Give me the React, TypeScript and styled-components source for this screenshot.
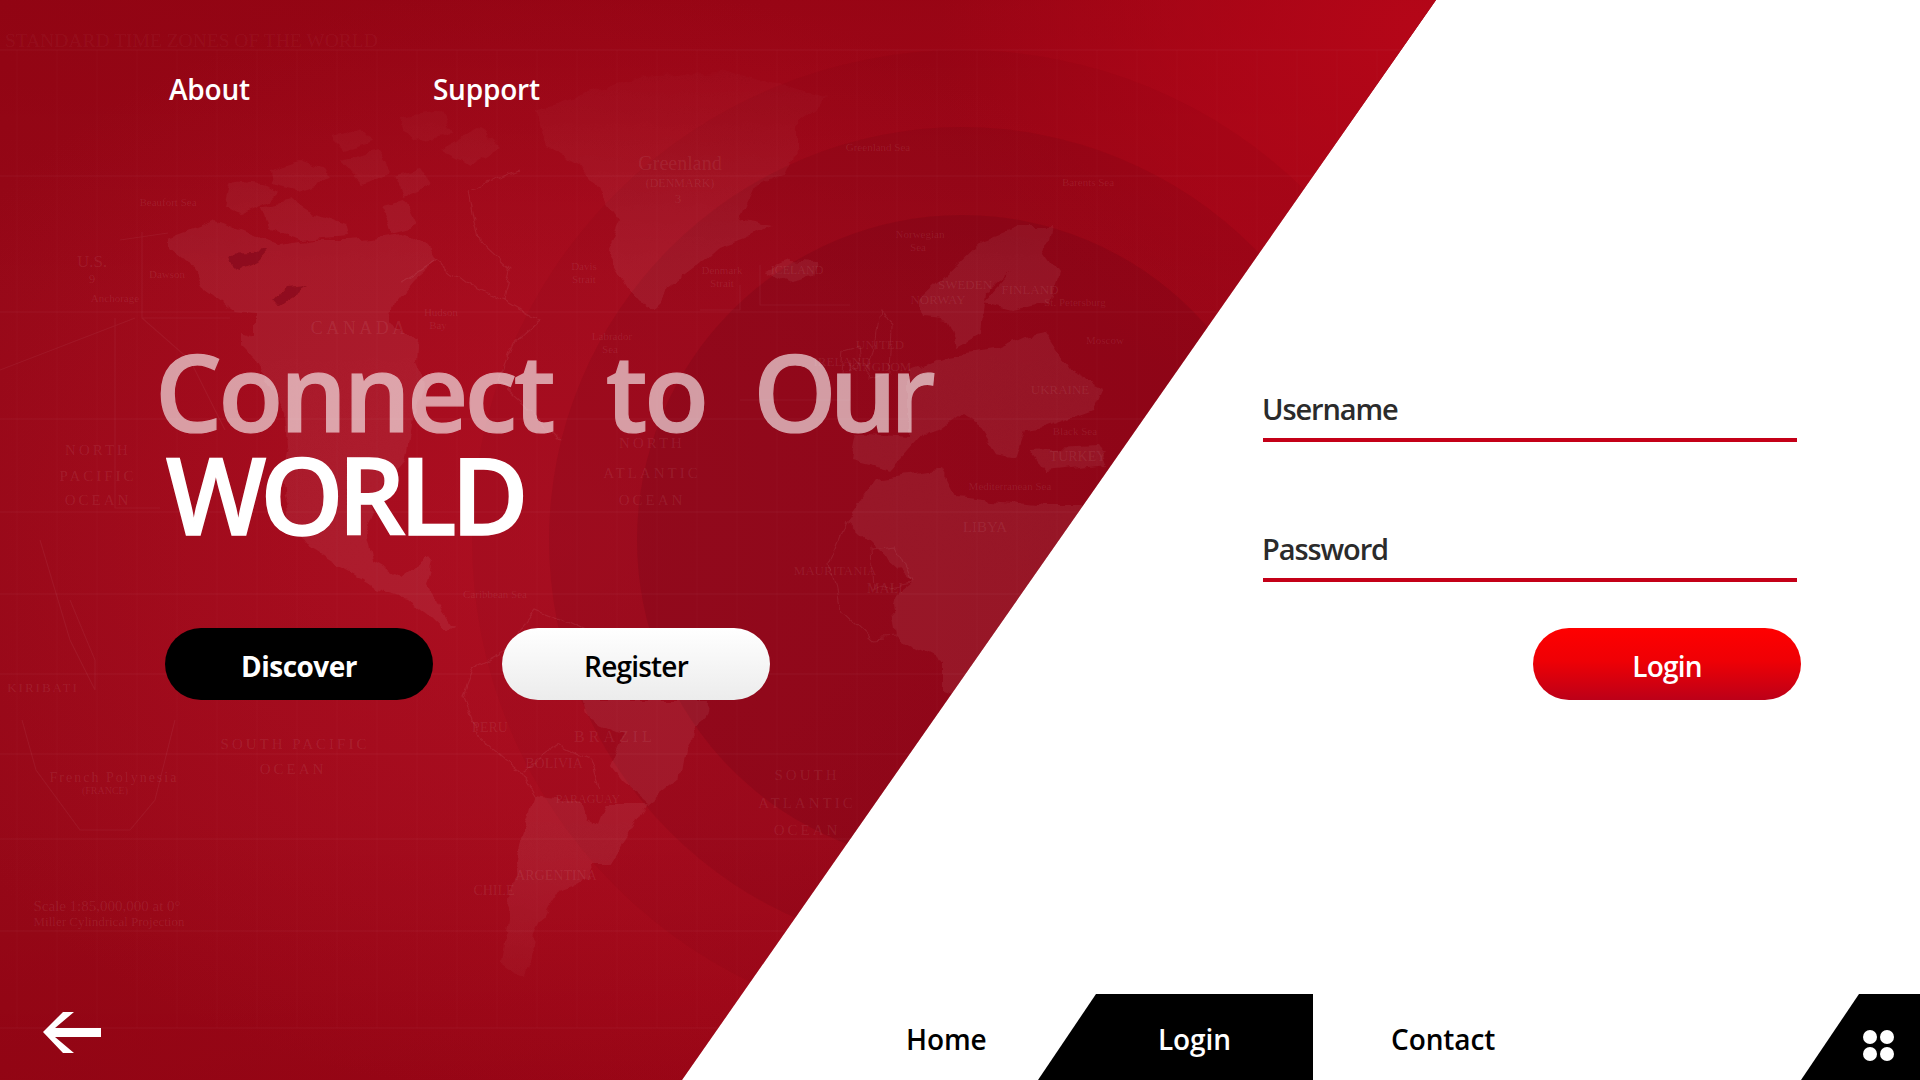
import React from "react";
import styled, { createGlobalStyle } from "styled-components";

const Global = createGlobalStyle`
  html, body { margin: 0; padding: 0; background: #fff; }
  * { box-sizing: border-box; }
`;

const FONT = `"Open Sans", "Noto Sans", "Liberation Sans", sans-serif`;

const Page = styled.div`
  position: relative;
  width: 1920px;
  height: 1080px;
  overflow: hidden;
  display: flex;
  flex-direction: column;
  background: #fff;
  font-family: ${FONT};
`;

const Backdrop = styled.div`
  position: absolute;
  inset: 0;
  clip-path: polygon(0 0, 1436px 0, 682px 100%, 0 100%);
  background:
    radial-gradient(ellipse 480px 400px at 1420px 30px, #b50618 0%, rgba(181, 6, 24, 0) 100%),
    radial-gradient(ellipse 720px 560px at 560px 540px, rgba(186, 20, 40, 0.5) 0%, rgba(186, 20, 40, 0) 100%),
    linear-gradient(180deg, rgba(140, 0, 14, 0.5) 0%, rgba(140, 0, 14, 0) 28%, rgba(140, 0, 14, 0) 76%, rgba(140, 0, 14, 0.42) 100%),
    linear-gradient(90deg, #960818 0%, #a40a1c 40%, #ab0618 100%);
`;

const MapArt = styled.svg`
  position: absolute;
  inset: 0;
  width: 1920px;
  height: 1080px;
`;

const Main = styled.main`
  position: relative;
  flex: 1;
  display: grid;
  grid-template-columns: 1263px 1fr;
`;

const Left = styled.section`
  display: flex;
  flex-direction: column;
  padding-left: 165px;
`;

const TopLinks = styled.nav`
  display: flex;
  padding: 69px 0 0 4px;
  gap: 183px;
`;

const TopLink = styled.a`
  color: #fff;
  font-size: 28px;
  line-height: 41px;
  font-weight: 600;
  letter-spacing: -0.2px;
`;

const Title = styled.h1`
  margin: 230px 0 0;
`;

const DimLine = styled.span`
  display: block;
  font-size: 106px;
  line-height: 103px;
  font-weight: 600;
  white-space: pre;
  color: #fff;
  opacity: 0.6;
  -webkit-text-stroke: 1.2px #fff;
  letter-spacing: -3.6px;
  word-spacing: 3px;
  margin-left: -10px;
`;

const TightWord = styled.span`
  margin-left: -6px;
  letter-spacing: -7px;
`;

const StrongLine = styled.span`
  display: block;
  font-size: 106px;
  line-height: 102px;
  font-weight: 600;
  color: #fff;
  -webkit-text-stroke: 1.4px #fff;
  letter-spacing: -6px;
  margin-left: 1px;
`;

const Buttons = styled.div`
  display: flex;
  gap: 69px;
  margin-top: 83px;
`;

const Pill = styled.button<{ $kind: "dark" | "light" | "red" }>`
  width: 268px;
  height: 72px;
  border: 0;
  border-radius: 36px;
  padding: 3px 0 0;
  font-family: ${FONT};
  font-size: 28px;
  letter-spacing: ${(p) => (p.$kind === "dark" ? "-0.5px" : "-0.8px")};
  font-weight: ${(p) => (p.$kind === "dark" ? 700 : 600)};
  color: ${(p) => (p.$kind === "light" ? "#000" : "#fff")};
  background: ${(p) =>
    p.$kind === "dark"
      ? "#000"
      : p.$kind === "light"
        ? "linear-gradient(180deg, #fff 0%, #ececec 100%)"
        : "linear-gradient(180deg, #ff0000 0%, #ef0005 45%, #bc0018 100%)"};
`;

const Form = styled.form`
  display: flex;
  flex-direction: column;
  width: 538px;
  padding-top: 389px;
`;

const Field = styled.label`
  display: block;
  width: 534px;
  height: 53px;
  margin-bottom: 87px;
  border-bottom: 4px solid #c40018;
  color: #2b2b2b;
  font-size: 29px;
  line-height: 40px;
  font-weight: 600;
  letter-spacing: -1.1px;
  text-indent: -1px;
`;

const FormAction = styled.div`
  display: flex;
  justify-content: flex-end;
  margin-top: -41px;
`;

const BottomBar = styled.footer`
  position: relative;
  display: flex;
  align-items: stretch;
  height: 86px;
`;

const Back = styled.a`
  width: 906px;
  padding: 18px 0 0 43px;
  flex: none;
`;

const NavItem = styled.a<{ $w: number }>`
  flex: none;
  width: ${(p) => p.$w}px;
  color: #000;
  font-size: 28px;
  font-weight: 600;
  letter-spacing: -0.1px;
  line-height: 90px;
`;

const NavTab = styled.a`
  flex: none;
  width: 275px;
  margin-right: 78px;
  padding-left: 120px;
  background: #000;
  clip-path: polygon(58px 0, 100% 0, 100% 100%, 0 100%);
  color: #fff;
  font-size: 28px;
  font-weight: 600;
  letter-spacing: -0.1px;
  line-height: 90px;
`;

const MenuTab = styled.a`
  flex: none;
  margin-left: auto;
  width: 119px;
  background: #000;
  clip-path: polygon(58px 0, 100% 0, 100% 100%, 0 100%);
  padding: 36px 0 0 62px;
`;

const Dots = styled.div`
  display: grid;
  grid-template-columns: 14px 14px;
  gap: 3px;
`;

const Dot = styled.span`
  width: 14px;
  height: 14px;
  border-radius: 50%;
  background: #fff;
`;

const land = [
  // Canada + US
  "M169,237 L215,220 L242,230 L280,245 L314,240 L349,240 L379,237 L406,232 L429,247 L437,260 L414,280 L395,303 L391,323 L418,337 L416,362 L425,385 L412,420 L405,462 L378,492 L366,530 L373,560 L402,577 L428,558 L432,563 L426,585 L438,603 L455,627 L446,632 L430,617 L405,597 L375,587 L333,563 L312,550 L290,520 L282,480 L288,448 L286,412 L257,362 L242,347 L242,333 L255,337 L255,312 L234,310 L207,290 L188,263 L169,247 Z",
  // Arctic islands
  "M230,182 L262,185 L280,192 L272,200 L242,213 L224,207 Z",
  "M261,207 L290,200 L310,212 L345,225 L348,236 L300,240 L268,228 Z",
  "M270,170 L300,160 L322,168 L330,180 L296,190 L272,184 Z",
  "M330,135 L360,128 L372,142 L345,150 Z",
  "M340,160 L378,152 L392,172 L362,184 Z",
  "M395,175 L420,168 L432,186 L405,198 Z",
  "M380,205 L405,200 L418,225 L392,232 Z",
  "M400,118 L440,112 L452,134 L415,140 Z",
  "M440,150 L480,128 L500,146 L470,165 Z",
  // Greenland
  "M536,110 L560,103 L642,77 L720,72 L773,83 L827,97 L798,120 L798,150 L788,173 L754,187 L739,220 L773,227 L720,247 L696,267 L669,287 L657,310 L633,297 L606,253 L620,220 L594,183 L578,163 L548,147 Z",
  // Iceland
  "M764,270 L788,260 L817,262 L813,277 L790,282 Z",
  // Scandinavia
  "M919,300 L948,273 L982,240 L1016,227 L1050,227 L1045,253 L1059,273 L1050,303 L1011,310 L984,303 L1013,270 L986,293 L982,333 L957,347 L948,320 L924,317 Z",
  // Europe
  "M909,370 L948,357 L996,350 L1025,337 L1045,333 L1069,370 L1103,387 L1093,410 L1045,427 L1025,430 L1016,457 L996,453 L977,423 L962,413 L943,427 L924,432 L890,470 L851,460 L856,433 L909,437 Z",
  // Turkey
  "M1030,450 L1098,447 L1108,463 L1045,470 Z",
  // Africa
  "M846,521 L875,480 L943,470 L957,497 L1045,507 L1130,507 L1130,700 L1000,740 L955,693 L943,689 L943,662 L897,638 L892,600 L913,583 Z",
  // Brazil
  "M583,700 L708,700 L707,713 L686,748 L682,775 L648,803 L623,782 L610,765 L623,734 L589,720 Z",
  // Southern cone
  "M535,796 L581,803 L587,817 L598,824 L606,803 L648,803 L631,831 L610,865 L589,865 L591,879 L560,889 L547,910 L535,934 L526,979 L501,961 L509,906 L520,844 Z",
];

const coast = [
  "M400,283 L437,260 L470,285 L505,300 L512,270 L480,240 L470,190 L520,170 M505,300 L540,320 L512,345 L498,380 L530,410 L560,440",
  "M474,669 L463,696 L480,738 L520,772 L535,796 M474,669 L500,655 L535,610 L560,620 L600,640 M520,772 L560,745 L590,760 L600,790",
  "M846,521 L830,560 L840,610 L872,640 L897,638 M913,583 L895,545 L870,548 L872,590 L913,583",
  "M880,310 L892,330 L890,372 L868,378 L875,345 Z M842,350 L858,345 L860,368 L840,372 Z",
];

const zones = [
  "M120,240 L168,233 M142,232 L142,318 L230,318 M142,318 L190,360 L225,430 M0,370 L135,318 M115,318 L115,508 L160,508",
  "M700,310 L740,310 L740,285 M760,265 L760,305 L850,305 M740,400 L850,400 L850,360",
  "M40,540 L70,640 L95,690 L95,660 L70,600 M22,720 L36,770 L80,830 L130,830 L155,800 L175,720",
];

const labels: [string, number, number, number, number?][] = [
  ["U.S.", 92, 267, 17], ["9", 92, 283, 13], ["Dawson", 167, 278, 11], ["Anchorage", 115, 302, 11],
  ["Beaufort Sea", 168, 206, 11], ["Greenland", 680, 170, 20], ["(DENMARK)", 680, 187, 12], ["3", 678, 203, 13],
  ["C A N A D A", 358, 334, 18], ["Hudson", 441, 316, 11], ["Bay", 438, 329, 11],
  ["NORTH", 98, 455, 15, 3], ["PACIFIC", 98, 481, 15, 3], ["OCEAN", 98, 505, 15, 3],
  ["NORTH", 652, 448, 15, 3], ["ATLANTIC", 652, 478, 15, 3], ["OCEAN", 652, 505, 15, 3],
  ["SOUTH  PACIFIC", 295, 749, 15, 3], ["OCEAN", 293, 774, 15, 3],
  ["SOUTH", 807, 780, 15, 3], ["ATLANTIC", 807, 808, 15, 3], ["OCEAN", 807, 835, 15, 3],
  ["KIRIBATI", 43, 692, 13, 2], ["French Polynesia", 114, 782, 14, 2], ["(FRANCE)", 105, 794, 10],
  ["Scale 1:85,000,000 at 0°", 107, 911, 15], ["Miller Cylindrical Projection", 109, 926, 13],
  ["BRAZIL", 615, 742, 16, 4], ["BOLIVIA", 554, 768, 14], ["PERU", 490, 732, 14], ["ARGENTINA", 556, 880, 14],
  ["CHILE", 494, 895, 14], ["PARAGUAY", 588, 803, 12], ["ICELAND", 797, 274, 12],
  ["SWEDEN", 965, 289, 13], ["FINLAND", 1030, 294, 13], ["NORWAY", 938, 304, 13], ["UNITED", 880, 349, 13],
  ["KINGDOM", 880, 371, 13], ["IRELAND", 842, 366, 13], ["TURKEY", 1078, 461, 14], ["UKRAINE", 1060, 394, 13],
  ["LIBYA", 985, 532, 15], ["MAURITANIA", 835, 575, 13], ["MALI", 885, 593, 14], ["St. Petersburg", 1075, 306, 11],
  ["Moscow", 1105, 344, 11], ["Caribbean Sea", 495, 598, 11], ["Norwegian", 920, 238, 11], ["Sea", 918, 251, 11],
  ["Denmark", 722, 274, 11], ["Strait", 722, 287, 11], ["Davis", 584, 270, 11], ["Strait", 584, 283, 11],
  ["Labrador", 612, 340, 11], ["Sea", 610, 353, 11], ["Barents Sea", 1088, 186, 11], ["Greenland Sea", 878, 151, 11],
  ["Mediterranean Sea", 1010, 490, 11], ["Black Sea", 1075, 435, 11],
];

const hLines = [50, 176, 312, 419, 512, 594, 674, 754, 839, 931, 1028];

function WorldMap() {
  const vLines: number[] = [];
  for (let x = 17; x < 1440; x += 40) vLines.push(x);
  return (
    <MapArt viewBox="0 0 1920 1080" aria-hidden="true">
      <defs>
        <linearGradient id="landFade" gradientUnits="userSpaceOnUse" x1="0" y1="60" x2="0" y2="1000">
          <stop offset="0" stopColor="#fff" stopOpacity="0.01" />
          <stop offset="0.22" stopColor="#fff" stopOpacity="0.06" />
          <stop offset="0.85" stopColor="#fff" stopOpacity="0.065" />
          <stop offset="1" stopColor="#fff" stopOpacity="0.02" />
        </linearGradient>
        <filter id="rugged" x="-5%" y="-5%" width="110%" height="110%">
          <feTurbulence type="fractalNoise" baseFrequency="0.05" numOctaves="3" seed="7" />
          <feDisplacementMap in="SourceGraphic" scale="12" xChannelSelector="R" yChannelSelector="G" />
        </filter>
      </defs>
      <circle cx="962" cy="540" r="490" fill="#5a0012" opacity="0.06" />
      <circle cx="962" cy="540" r="413" fill="#5a0012" opacity="0.12" />
      <circle cx="962" cy="540" r="325" fill="#5a0012" opacity="0.16" />
      <g fill="url(#landFade)" filter="url(#rugged)">
        {land.map((d, i) => (
          <path key={i} d={d} />
        ))}
      </g>
      <path d="M230,253 L268,251 L258,262 L240,270 L232,262 Z M272,303 L285,288 L310,286 L292,296 L280,304 Z" fill="#7a0012" opacity="0.5" filter="url(#rugged)" />
      <g fill="none" stroke="#fff" strokeOpacity="0.07" strokeWidth="1.1" filter="url(#rugged)">
        {coast.map((d, i) => (
          <path key={i} d={d} />
        ))}
      </g>
      <g fill="none" stroke="#fff" strokeOpacity="0.05" strokeWidth="1.1">
        {zones.map((d, i) => (
          <path key={i} d={d} />
        ))}
        {hLines.map((y) => (
          <line key={y} x1="0" x2="1440" y1={y} y2={y} />
        ))}
      </g>
      <g stroke="#fff" strokeOpacity="0.025" strokeWidth="1">
        {vLines.map((x) => (
          <line key={x} x1={x} x2={x} y1="50" y2="1028" />
        ))}
      </g>
      <text x="5" y="47" fill="#fff" fillOpacity="0.05" fontFamily="'Liberation Serif', serif" fontSize="19.5">
        STANDARD TIME ZONES OF THE WORLD
      </text>
      <g fill="#fff" fillOpacity="0.085" fontFamily="'Liberation Serif', serif" textAnchor="middle">
        {labels.map(([t, x, y, s, ls], i) => (
          <text key={i} x={x} y={y} fontSize={s} letterSpacing={ls ?? 0}>
            {t}
          </text>
        ))}
      </g>
    </MapArt>
  );
}

export default function App() {
  return (
    <Page>
      <Global />
      <Backdrop>
        <WorldMap />
      </Backdrop>
      <Main>
        <Left>
          <TopLinks>
            <TopLink>About</TopLink>
            <TopLink>Support</TopLink>
          </TopLinks>
          <Title>
            <DimLine>
              {"Connect  to  "}
              <TightWord>Our</TightWord>
            </DimLine>
            <StrongLine>WORLD</StrongLine>
          </Title>
          <Buttons>
            <Pill $kind="dark">Discover</Pill>
            <Pill $kind="light">Register</Pill>
          </Buttons>
        </Left>
        <Form>
          <Field>Username</Field>
          <Field>Password</Field>
          <FormAction>
            <Pill $kind="red">Login</Pill>
          </FormAction>
        </Form>
      </Main>
      <BottomBar>
        <Back>
          <svg width="60" height="44" viewBox="43 1012 60 44">
            <polygon fill="#fff" points="43,1032 63,1012 74,1012 55,1028 101,1028 101,1037 55,1037 74,1053 63,1053" />
          </svg>
        </Back>
        <NavItem $w={132}>Home</NavItem>
        <NavTab>Login</NavTab>
        <NavItem $w={120}>Contact</NavItem>
        <MenuTab>
          <Dots>
            <Dot />
            <Dot />
            <Dot />
            <Dot />
          </Dots>
        </MenuTab>
      </BottomBar>
    </Page>
  );
}
